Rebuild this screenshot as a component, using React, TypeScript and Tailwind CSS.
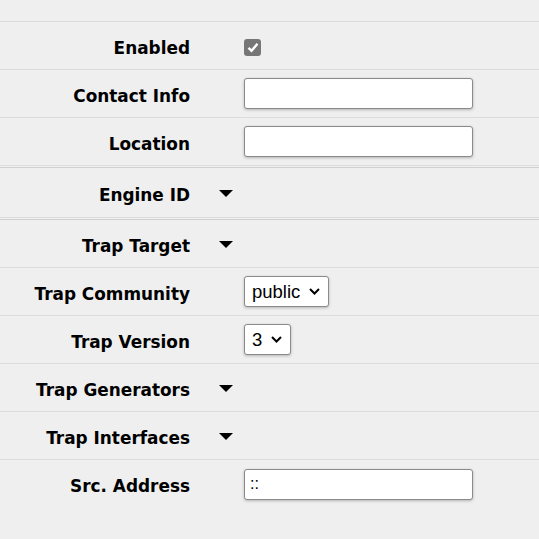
const font = { fontFamily: '"DejaVu Sans", Verdana, sans-serif' };

function Label({ children }: { children: React.ReactNode }) {
  return (
    <div className="w-[190px] shrink-0 pt-[6px] text-right text-[16.9px] font-bold text-black" style={font}>
      {children}
    </div>
  );
}

function Row({ label, tall, children }: { label: string; tall?: boolean; children?: React.ReactNode }) {
  return (
    <div className={`flex items-center border-b border-[#dcdcdc] ${tall ? "h-[50px]" : "h-[48px]"}`}>
      <Label>{label}</Label>
      <div className="flex items-center pl-[54px]">{children}</div>
    </div>
  );
}

function Caret() {
  return (
    <div className="-ml-[25px] flex items-center pt-[2px]">
      <svg width="14" height="8" viewBox="0 0 14 8">
        <path d="M0 0 H14 L7 7 Z" fill="#000" />
      </svg>
    </div>
  );
}

function TextInput({ value = "" }: { value?: string }) {
  return (
    <input
      readOnly
      value={value}
      className="h-[31px] w-[229px] rounded-[3px] border border-[#8a8a8a] bg-white px-[5px] text-[16px] text-black shadow-[0_1px_3px_rgba(0,0,0,0.25)] outline-none"
      style={{ fontFamily: '"Liberation Sans", Arial, sans-serif' }}
    />
  );
}

function Select({ value }: { value: string }) {
  return (
    <div
      className="flex h-[31px] items-center gap-[9px] rounded-[3px] border border-[#8a8a8a] bg-white pl-[7px] pr-[8px] text-[18.5px] text-black shadow-[0_1px_3px_rgba(0,0,0,0.25)]"
      style={{ fontFamily: '"Liberation Sans", Arial, sans-serif' }}
    >
      <span>{value}</span>
      <svg width="11" height="7" viewBox="0 0 11 7">
        <path d="M1 1 L5.5 5.5 L10 1" stroke="#000" strokeWidth="2" fill="none" />
      </svg>
    </div>
  );
}

function Checkbox() {
  return (
    <div className="mt-[3px] flex h-[17px] w-[17px] items-center justify-center rounded-[3px] bg-[#767676]">
      <svg width="12" height="11" viewBox="0 0 12 11">
        <path d="M1.5 5.8 L4.5 8.8 L10.5 1.8" stroke="#fff" strokeWidth="2.4" fill="none" />
      </svg>
    </div>
  );
}

export default function App() {
  return (
    <div className="h-[539px] w-[539px] overflow-hidden bg-[#efefef]">
      <div className="h-[22px] border-b border-[#dcdcdc]" />
      <Row label="Enabled">
        <Checkbox />
      </Row>
      <Row label="Contact Info">
        <TextInput />
      </Row>
      <Row label="Location">
        <TextInput />
      </Row>

      <div className="mt-[1px] border-t border-[#d0d0d0]">
        <Row label="Engine ID" tall>
          <Caret />
        </Row>
      </div>

      <div className="mt-[1px] border-t border-[#d0d0d0]">
        <Row label="Trap Target">
          <Caret />
        </Row>
        <Row label="Trap Community">
          <Select value="public" />
        </Row>
        <Row label="Trap Version">
          <Select value="3" />
        </Row>
        <Row label="Trap Generators">
          <Caret />
        </Row>
        <Row label="Trap Interfaces">
          <Caret />
        </Row>
        <div className="flex h-[48px] items-center">
          <Label>Src. Address</Label>
          <div className="flex items-center pl-[54px]">
            <TextInput value="::" />
          </div>
        </div>
      </div>
    </div>
  );
}
